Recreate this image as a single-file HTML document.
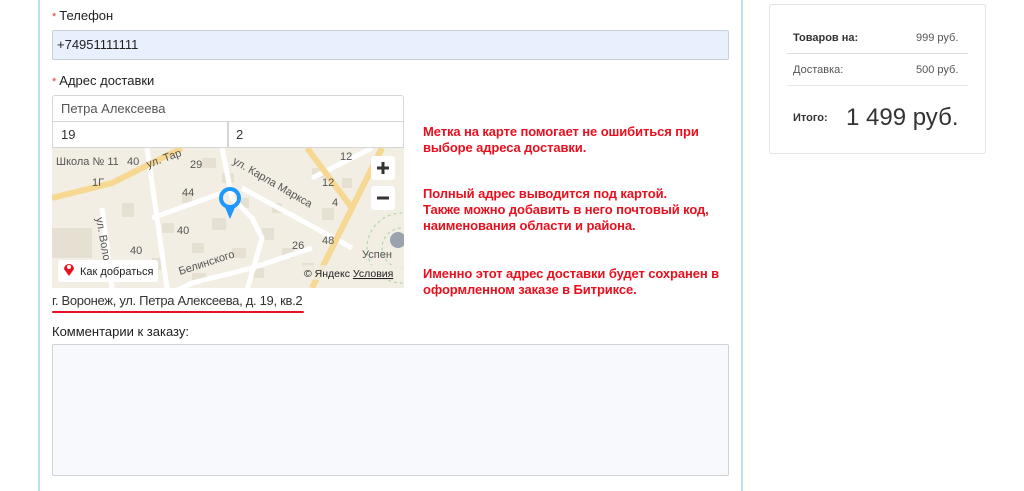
<!DOCTYPE html>
<html><head><meta charset="utf-8"><style>
body{margin:0;width:1024px;height:491px;background:#fff;font-family:"Liberation Sans",sans-serif;position:relative;overflow:hidden;color:#222}
.a{position:absolute}
.lbl{font-size:13px;color:#222}
.lbl i{color:#e53935;font-style:normal;font-size:11px;margin-right:3px}
.red{color:#e8101e;font-weight:bold;font-size:13px;line-height:16px;letter-spacing:-0.1px}
</style></head><body>
<div class="a" style="left:38px;top:0;width:2px;height:491px;background:#b8e3ee"></div>
<div class="a" style="left:741px;top:0;width:2px;height:491px;background:#b8e3ee"></div>

<div class="a lbl" style="left:52px;top:8px"><i>*</i>Телефон</div>
<div class="a" style="left:52px;top:30px;width:675px;height:28px;background:#e8f0fd;border:1px solid #c8d0d8;border-radius:2px;font-size:13px;line-height:28px;text-indent:4px">+74951111111</div>

<div class="a lbl" style="left:52px;top:73px"><i>*</i>Адрес доставки</div>
<div class="a" style="left:52px;top:95px;width:350px;height:25px;border:1px solid #d6d6d6;border-radius:3px 3px 0 0;font-size:13px;line-height:25px;text-indent:8px;color:#555">Петра Алексеева</div>
<div class="a" style="left:52px;top:121px;width:175px;height:25px;border:1px solid #d6d6d6;font-size:13px;line-height:25px;text-indent:8px;color:#333">19</div>
<div class="a" style="left:227px;top:121px;width:175px;height:25px;border:1px solid #d6d6d6;font-size:13px;line-height:25px;text-indent:8px;color:#333">2</div>

<svg class="a" style="left:52px;top:148px" width="352" height="140" viewBox="0 0 352 140" font-family="Liberation Sans" font-size="11" fill="#555">
<rect width="352" height="140" fill="#f2eee3"/>
<g fill="#e6e0d2">
<rect x="150" y="10" width="14" height="10"/><rect x="170" y="25" width="12" height="10"/><rect x="185" y="50" width="12" height="10"/><rect x="160" y="70" width="14" height="12"/><rect x="130" y="45" width="10" height="10"/><rect x="110" y="75" width="12" height="10"/><rect x="140" y="95" width="12" height="10"/><rect x="180" y="100" width="14" height="10"/><rect x="210" y="80" width="12" height="12"/><rect x="230" y="100" width="12" height="10"/><rect x="260" y="20" width="12" height="10"/><rect x="290" y="30" width="10" height="10"/><rect x="270" y="60" width="12" height="12"/><rect x="100" y="110" width="14" height="12"/><rect x="70" y="55" width="12" height="14"/><rect x="200" y="120" width="12" height="10"/><rect x="0" y="80" width="40" height="30"/><rect x="140" y="125" width="14" height="10"/><rect x="250" y="115" width="12" height="12"/><rect x="220" y="55" width="10" height="10"/>
</g>
<g stroke="#fff" stroke-width="5" fill="none">
<path d="M95 0 L115 140"/><path d="M50 60 L60 140"/><path d="M170 0 L180 50 L200 70 L210 90 L190 160"/><path d="M190 40 L300 100"/><path d="M90 160 L140 135 L200 120 L260 100"/><path d="M320 0 L260 30"/><path d="M100 70 L170 45"/>
</g>
<g stroke="#f6d892" stroke-width="6" fill="none">
<path d="M0 50 L60 35 L130 0"/><path d="M255 0 L300 60 L330 0"/><path d="M300 60 L260 140"/>
</g>
<g fill="none" stroke="#a7d4a0" stroke-dasharray="3 3"><circle cx="350" cy="100" r="35"/><circle cx="350" cy="100" r="20"/></g>
<text x="4" y="17">Школа № 11</text><text x="75" y="17">40</text><text x="96" y="20" transform="rotate(-20 96 20)">ул. Тар</text><text x="138" y="20">29</text><text x="40" y="38">1Г</text><text x="130" y="48">44</text><text x="125" y="86">40</text><text x="78" y="106">40</text><text x="180" y="15" transform="rotate(30 180 15)">ул. Карла Маркса</text><text x="270" y="38">12</text><text x="288" y="12">12</text><text x="280" y="58">4</text><text x="240" y="101">26</text><text x="270" y="156" transform="translate(0 -60)">48</text><text x="128" y="127" transform="rotate(-18 128 127)">Белинского</text><text x="44" y="70" transform="rotate(80 44 70)">ул. Володар</text><text x="310" y="110">Успен</text>
<circle cx="346" cy="92" r="8" fill="#9aa3ad"/>
<rect x="319" y="8" width="24" height="24" rx="3" fill="#fff"/><path d="M325 20h12M331 14v12" stroke="#333" stroke-width="3"/>
<rect x="319" y="38" width="24" height="24" rx="3" fill="#fff"/><path d="M325 50h12" stroke="#333" stroke-width="3"/>
<circle cx="178" cy="50" r="9" fill="none" stroke="#1e98ff" stroke-width="4"/><path d="M172 57 L178 71 L184 57 Z" fill="#1e98ff"/>
<rect x="6" y="112" width="100" height="22" rx="3" fill="#fff"/><path d="M17 128 l-5 -7 a5 5 0 1 1 10 0 z" fill="#e8101e"/><circle cx="17" cy="119" r="2" fill="#fff"/>
<text x="28" y="127" fill="#222" font-size="11">Как добраться</text>
<rect x="248" y="117" width="104" height="15" fill="#f2eee3" opacity=".8"/><text x="252" y="129" fill="#222" font-size="10.5">© Яндекс <tspan text-decoration="underline">Условия</tspan></text>
</svg>

<div class="a" style="left:52px;top:293px;font-size:13px;color:#333;letter-spacing:-0.3px">г. Воронеж, ул. Петра Алексеева, д. 19, кв.2</div>
<div class="a" style="left:52px;top:311px;width:252px;height:2px;background:#e8101e;border-radius:1px"></div>
<div class="a lbl" style="left:52px;top:324px">Комментарии к заказу:</div>
<div class="a" style="left:52px;top:344px;width:675px;height:130px;background:#f7f9fc;border:1px solid #cdd3d6;border-radius:2px"></div>

<div class="a red" style="left:423px;top:124px">Метка на карте помогает не ошибиться при<br>выборе адреса доставки.</div>
<div class="a red" style="left:423px;top:186px">Полный адрес выводится под картой.<br>Также можно добавить в него почтовый код,<br>наименования области и района.</div>
<div class="a red" style="left:423px;top:266px">Именно этот адрес доставки будет сохранен в<br>оформленном заказе в Битриксе.</div>

<div class="a" style="left:769px;top:4px;width:215px;height:148px;border:1px solid #e3e3e3;border-radius:3px"></div>
<div class="a" style="left:793px;top:32px;font-size:11px;font-weight:bold;color:#333">Товаров на:</div>
<div class="a" style="left:916px;top:32px;font-size:11px;color:#555">999 руб.</div>
<div class="a" style="left:787px;top:53px;width:181px;height:1px;background:#ddd"></div>
<div class="a" style="left:793px;top:64px;font-size:11px;color:#555">Доставка:</div>
<div class="a" style="left:916px;top:64px;font-size:11px;color:#555">500 руб.</div>
<div class="a" style="left:787px;top:85px;width:181px;height:1px;background:#e8e8e8"></div>
<div class="a" style="left:793px;top:112px;font-size:11px;font-weight:bold;color:#333">Итого:</div>
<div class="a" style="left:846px;top:104px;font-size:24px;color:#333">1 499 руб.</div>
</body></html>
